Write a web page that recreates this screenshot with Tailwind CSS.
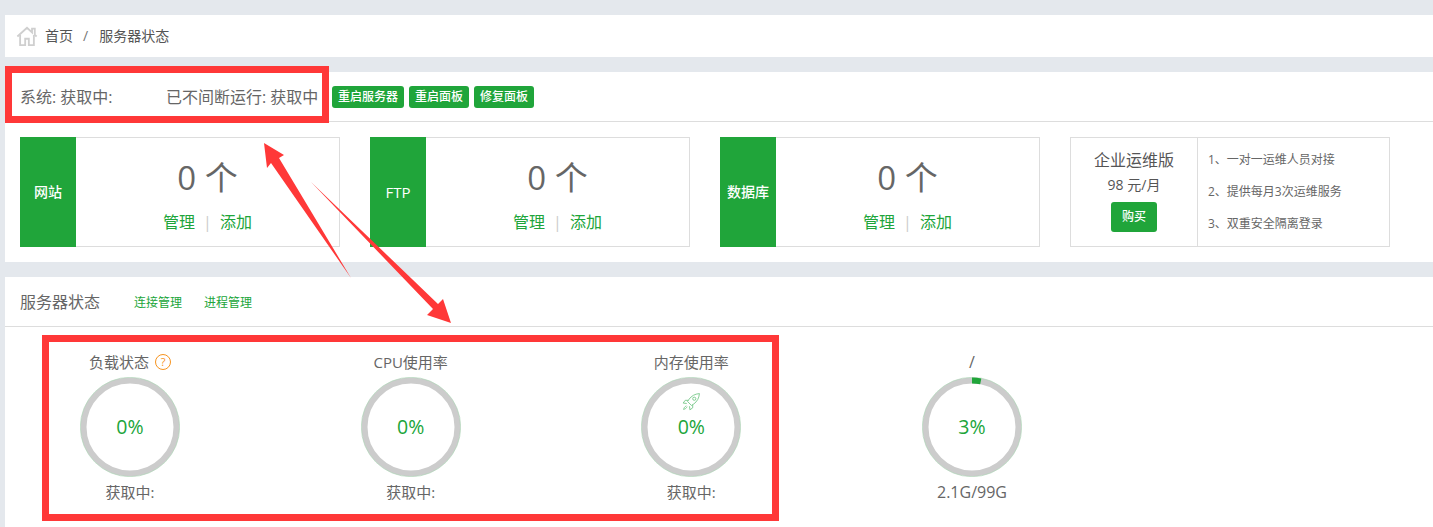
<!DOCTYPE html>
<html lang="zh-CN">
<head>
    <meta charset="UTF-8">
    <title>服务器状态</title>
    <script src="https://cdn.jsdelivr.net/npm/@tailwindcss/browser@4"></script>
</head>
<body class="bg-[#e4e8ed] h-[527px] overflow-hidden relative text-[#666] font-['Open_Sans','Noto_Sans_CJK_SC',sans-serif]">
    <div class="pl-[5px] pt-[15px]">
        <!-- Breadcrumb -->
        <div class="bg-white h-[42px] flex items-center pl-[11px] text-sm text-[#555]">
            <svg class="w-[22px] h-[22px] mr-[7px]" viewBox="0 0 24 24" fill="none" stroke="#cfcfcf" stroke-width="2">
                <path d="M1.500 12.500 12 3l5.500 5V4h3v6.700l2 1.800"/>
                <path d="M4.500 11v11h5.500v-7h4v7h5.500V11"/>
            </svg>
            <a href="#">首页</a>
            <span class="ml-[10px] mr-[11px] text-[#777]">/</span>
            <span>服务器状态</span>
        </div>

        <!-- Overview -->
        <div class="bg-white mt-[15px] h-[190px]">
            <div class="h-[50px] border-b border-[#ddd] flex items-center pl-[15px] text-base">
                <span class="w-[146px] pt-px">系统: 获取中:</span>
                <span class="w-[166px] pt-px">已不间断运行: 获取中</span>
                <div class="flex gap-[5px] text-xs text-white">
                    <button class="bg-[#20a53a] rounded-[3px] h-[22px] px-[6px] whitespace-nowrap font-medium">重启服务器</button>
                    <button class="bg-[#20a53a] rounded-[3px] h-[22px] px-[6px] whitespace-nowrap font-medium">重启面板</button>
                    <button class="bg-[#20a53a] rounded-[3px] h-[22px] px-[6px] whitespace-nowrap font-medium">修复面板</button>
                </div>
            </div>
            <div class="flex gap-[30px] pl-[15px] pt-[15px]">
                <div class="w-[320px] h-[110px] border border-[#ddd] flex">
                    <div class="w-[56px] -ml-px -my-px bg-[#20a53a] text-white text-sm font-medium flex items-center justify-center">网站</div>
                    <div class="flex-1 flex flex-col items-center">
                        <div class="text-[33px] leading-[40px] mt-[20px]">0 个</div>
                        <div class="text-base leading-[22px] mt-[13px] text-[#20a53a]">管理<span class="mx-[8px] text-[#ccc]">|</span>添加</div>
                    </div>
                </div>
                <div class="w-[320px] h-[110px] border border-[#ddd] flex">
                    <div class="w-[56px] -ml-px -my-px bg-[#20a53a] text-white text-[15px] font-medium flex items-center justify-center">FTP</div>
                    <div class="flex-1 flex flex-col items-center">
                        <div class="text-[33px] leading-[40px] mt-[20px]">0 个</div>
                        <div class="text-base leading-[22px] mt-[13px] text-[#20a53a]">管理<span class="mx-[8px] text-[#ccc]">|</span>添加</div>
                    </div>
                </div>
                <div class="w-[320px] h-[110px] border border-[#ddd] flex">
                    <div class="w-[56px] -ml-px -my-px bg-[#20a53a] text-white text-sm font-medium flex items-center justify-center">数据库</div>
                    <div class="flex-1 flex flex-col items-center">
                        <div class="text-[33px] leading-[40px] mt-[20px]">0 个</div>
                        <div class="text-base leading-[22px] mt-[13px] text-[#20a53a]">管理<span class="mx-[8px] text-[#ccc]">|</span>添加</div>
                    </div>
                </div>
                <div class="w-[320px] h-[110px] border border-[#ddd] flex">
                    <div class="w-[127px] border-r border-[#ddd] flex flex-col items-center text-[#555]">
                        <div class="text-base leading-[22px] mt-[11px]">企业运维版</div>
                        <div class="text-sm leading-[20px] mt-[4px]">98 元/月</div>
                        <button class="bg-[#20a53a] text-white text-xs font-medium rounded-[3px] w-[46px] h-[30px] mt-[7px]">购买</button>
                    </div>
                    <div class="flex-1 pl-[10px] pt-[6px] text-xs text-[#666]">
                        <div class="leading-[32px]">1、一对一运维人员对接</div>
                        <div class="leading-[32px]">2、提供每月3次运维服务</div>
                        <div class="leading-[32px]">3、双重安全隔离登录</div>
                    </div>
                </div>
            </div>
        </div>

        <!-- Server status -->
        <div class="bg-white mt-[15px] h-[250px]">
            <div class="h-[50px] border-b border-[#ddd] flex items-center pl-[15px]">
                <span class="text-base w-[114px]">服务器状态</span>
                <a href="#" class="text-xs text-[#20a53a] mr-[22px] pt-[2px]">连接管理</a>
                <a href="#" class="text-xs text-[#20a53a] pt-[2px]">进程管理</a>
            </div>
            <div class="flex gap-[180.67px] pl-[75px] text-[15px] whitespace-nowrap">
                <div class="w-[100px] flex flex-col items-center">
                    <div class="h-[20px] leading-[20px] mt-[25px] mb-[5px] flex items-center">负载状态<span class="ml-[6px] w-4 h-4 rounded-full border border-[#f7931e] text-[#f7931e] text-[11px] leading-[14px] text-center">?</span></div>
                    <div class="relative w-[100px] h-[100px]">
                        <svg class="w-[100px] h-[100px]" viewBox="0 0 100 100" fill="none">
                            <circle cx="50" cy="50" r="46.500" stroke="#cccccc" stroke-width="6"/>
                            <circle cx="50" cy="50" r="49.700" stroke="#a8d5b2" stroke-width="0.600"/>
                        </svg>
                        <div class="absolute inset-0 flex items-center justify-center text-[#20a53a] text-[19.500px]">0%</div>
                    </div>
                    <div class="mt-[5px] leading-[20px]">获取中:</div>
                </div>
                <div class="w-[100px] flex flex-col items-center">
                    <div class="h-[20px] leading-[20px] mt-[25px] mb-[5px]">CPU使用率</div>
                    <div class="relative w-[100px] h-[100px]">
                        <svg class="w-[100px] h-[100px]" viewBox="0 0 100 100" fill="none">
                            <circle cx="50" cy="50" r="46.500" stroke="#cccccc" stroke-width="6"/>
                            <circle cx="50" cy="50" r="49.700" stroke="#a8d5b2" stroke-width="0.600"/>
                        </svg>
                        <div class="absolute inset-0 flex items-center justify-center text-[#20a53a] text-[19.500px]">0%</div>
                    </div>
                    <div class="mt-[5px] leading-[20px]">获取中:</div>
                </div>
                <div class="w-[100px] flex flex-col items-center">
                    <div class="h-[20px] leading-[20px] mt-[25px] mb-[5px]">内存使用率</div>
                    <div class="relative w-[100px] h-[100px]">
                        <svg class="w-[100px] h-[100px]" viewBox="0 0 100 100" fill="none">
                            <circle cx="50" cy="50" r="46.500" stroke="#cccccc" stroke-width="6"/>
                            <circle cx="50" cy="50" r="49.700" stroke="#a8d5b2" stroke-width="0.600"/>
                        </svg>
                        <svg class="absolute left-[41px] top-[15px] w-[19px] h-[19px]" viewBox="0 0 24 24" fill="none" stroke="#72c585" stroke-width="1.100">
                            <path d="M22 2c-6 .5-10 3-13 7l-2 3 5 5 3-2c4-3 6.500-7 7-13z"/>
                            <circle cx="15.500" cy="8.500" r="2"/>
                            <path d="M8 10.500H4l-2.500 3.500 4.500.500M13.500 16v4L10 22.500 9.500 18"/>
                            <path d="M5.500 17.500C3.500 18.500 2.500 20 2 22c2-.5 3.500-1.500 4.500-3.500"/>
                        </svg>
                        <div class="absolute inset-0 flex items-center justify-center text-[#20a53a] text-[19.500px]">0%</div>
                    </div>
                    <div class="mt-[5px] leading-[20px]">获取中:</div>
                </div>
                <div class="w-[100px] flex flex-col items-center">
                    <div class="h-[20px] leading-[20px] mt-[25px] mb-[5px] text-base">/</div>
                    <div class="relative w-[100px] h-[100px]">
                        <svg class="w-[100px] h-[100px]" viewBox="0 0 100 100" fill="none">
                            <circle cx="50" cy="50" r="46.500" stroke="#cccccc" stroke-width="6"/>
                            <circle cx="50" cy="50" r="49.700" stroke="#a8d5b2" stroke-width="0.600"/>
                            <circle cx="50" cy="50" r="46.500" stroke="#20a53a" stroke-width="6" stroke-dasharray="8.800 300" transform="rotate(-90 50 50)"/>
                        </svg>
                        <div class="absolute inset-0 flex items-center justify-center text-[#20a53a] text-[19.500px]">3%</div>
                    </div>
                    <div class="mt-[5px] leading-[20px] text-base">2.1G/99G</div>
                </div>
            </div>
        </div>
    </div>

    <!-- Red annotations drawn on top of the screenshot -->
    <div class="absolute left-[5px] top-[66px] w-[324px] h-[57px] border-[7px] border-[#ff3838]"></div>
    <div class="absolute left-[42px] top-[335px] w-[737px] h-[186px] border-[7px] border-[#ff3838]"></div>
    <svg class="absolute left-0 top-0 w-[1433px] h-[527px] pointer-events-none" viewBox="0 0 1433 527">
        <polygon fill="#ff3838" points="264,143 284,155 279,158 351,278 271,163 267,168"/>
        <polygon fill="#ff3838" points="311,182 438,304 443,299 451,323 427,315 433,309"/>
    </svg>
</body>
</html>
